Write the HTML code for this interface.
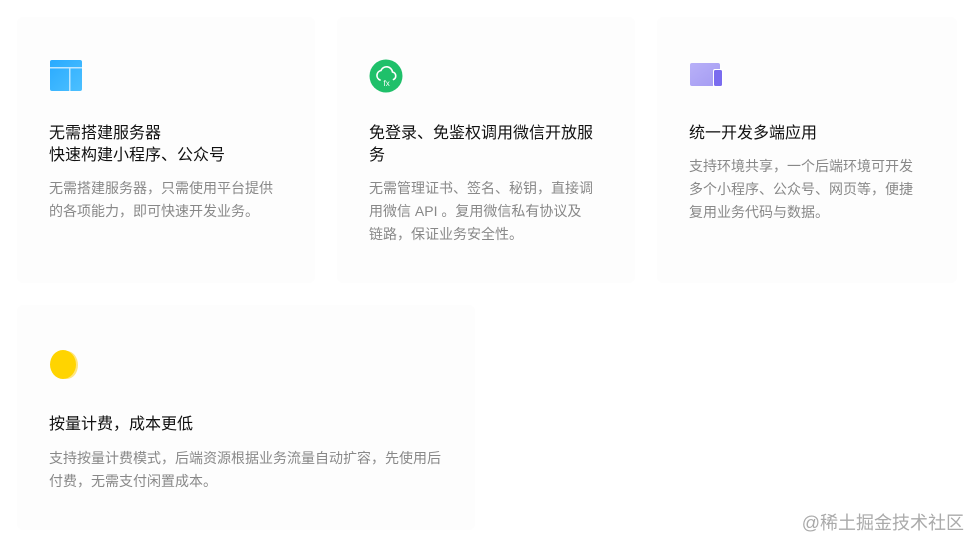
<!DOCTYPE html>
<html><head><meta charset="utf-8"><style>
body{margin:0;width:978px;height:543px;background:#fff;position:relative;overflow:hidden;font-family:"Liberation Sans","Noto Sans CJK SC",sans-serif}
.c{position:absolute;background:#fdfdfd;border-radius:6px}
.ic{position:absolute;left:32px;top:42px;width:34px;height:34px}
.t{position:absolute;left:32px;top:106px;width:232px;font-size:16px;line-height:22px;color:#111}
.d{position:absolute;left:32px;width:226px;font-size:14px;line-height:23px;color:#888}
.w{position:absolute;right:14px;bottom:8px;font-size:18px;color:#aaa}
</style></head><body>
<div class="c" style="left:17px;top:17px;width:298px;height:266px">
<svg class="ic" viewBox="0 0 34 34"><defs><linearGradient id="g1" x1="0" y1="0" x2="1" y2="1"><stop offset="0" stop-color="#29aaff"/><stop offset="1" stop-color="#4cc0ff"/></linearGradient></defs><rect x="1" y="1" width="32" height="31" rx="2" fill="url(#g1)"/><rect x="1" y="8" width="32" height="1.5" fill="#bfe6ff"/><rect x="20" y="8" width="1.5" height="24" fill="#bfe6ff"/></svg>
<div class="t">无需搭建服务器<br>快速构建小程序、公众号</div>
<div class="d" style="top:160px">无需搭建服务器，只需使用平台提供的各项能力，即可快速开发业务。</div>
</div>
<div class="c" style="left:337px;top:17px;width:298px;height:266px">
<svg class="ic" viewBox="0 0 34 34"><circle cx="17" cy="17" r="16.5" fill="#1fc06a"/><path d="M11 21a5 5 0 0 1 1-9.5a6 6 0 0 1 11.5 1.5a4 4 0 0 1 1 7.5" fill="none" stroke="#fff" stroke-width="1.6" stroke-linecap="round"/><text x="14.5" y="27" font-size="8" fill="#fff" font-family="Liberation Sans">fx</text></svg>
<div class="t">免登录、免鉴权调用微信开放服务</div>
<div class="d" style="top:160px">无需管理证书、签名、秘钥，直接调用微信 API 。复用微信私有协议及链路，保证业务安全性。</div>
</div>
<div class="c" style="left:657px;top:17px;width:300px;height:266px">
<svg class="ic" viewBox="0 0 34 34"><defs><linearGradient id="g3" x1="0" y1="0" x2="1" y2="1"><stop offset="0" stop-color="#b8b0f8"/><stop offset="1" stop-color="#a49bf2"/></linearGradient></defs><rect x="1" y="4" width="30" height="23" rx="2" fill="url(#g3)"/><rect x="24" y="10" width="10" height="18" rx="2" fill="#fff"/><rect x="25" y="11" width="8" height="16" rx="1.5" fill="#7a6cef"/></svg>
<div class="t">统一开发多端应用</div>
<div class="d" style="top:138px">支持环境共享，一个后端环境可开发多个小程序、公众号、网页等，便捷复用业务代码与数据。</div>
</div>
<div class="c" style="left:17px;top:305px;width:458px;height:225px">
<svg class="ic" viewBox="0 0 34 34" style="top:43px"><ellipse cx="18" cy="17" rx="11" ry="14" fill="#ffe680"/><ellipse cx="14" cy="16.5" rx="13" ry="14.5" fill="#ffd400"/></svg>
<div class="t" style="width:420px;top:109px">按量计费，成本更低</div>
<div class="d" style="top:142px;width:400px">支持按量计费模式，后端资源根据业务流量自动扩容，先使用后付费，无需支付闲置成本。</div>
</div>
<div class="w">@稀土掘金技术社区</div>
</body></html>
